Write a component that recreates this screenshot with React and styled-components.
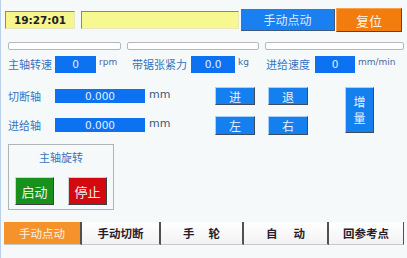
import styled, { createGlobalStyle } from "styled-components";

const GlobalStyle = createGlobalStyle`
  html, body {
    margin: 0;
    padding: 0;
    background: #ffffff;
  }
  body {
    font-family: "Noto Sans CJK SC", "DejaVu Sans", sans-serif;
  }
`;

const Screen = styled.div`
  width: 407px;
  height: 258px;
  background: #f5f9f9;
  border-left: 1px solid #b8d0e8;
  box-sizing: border-box;
  display: flex;
  flex-direction: column;
  overflow: hidden;
`;

const TopBar = styled.div`
  display: flex;
  align-items: center;
  padding: 8px 0 0 4px;
  height: 24px;
`;

const Clock = styled.div`
  width: 70px;
  height: 18px;
  box-sizing: border-box;
  background: #f6f68c;
  border: 1px solid;
  border-color: #8c8c64 #e6e6c0 #e6e6c0 #8c8c64;
  display: flex;
  align-items: center;
  justify-content: center;
  font-family: "DejaVu Sans", sans-serif;
  font-weight: bold;
  font-size: 10.5px;
  color: #202020;
`;

const Message = styled.div`
  width: 158px;
  height: 18px;
  margin-left: 6px;
  box-sizing: border-box;
  background: #f8f890;
  border: 1px solid;
  border-color: #8c8c64 #e6e6c0 #e6e6c0 #8c8c64;
`;

const ModeButton = styled.div`
  width: 94px;
  height: 22px;
  margin-left: 2px;
  box-sizing: border-box;
  background: #1a80f0;
  border-right: 1px solid #3a5a80;
  border-bottom: 1px solid #3a5a80;
  color: #dceaff;
  font-size: 12px;
  display: flex;
  align-items: center;
  justify-content: center;
`;

const ResetButton = styled.div`
  width: 66px;
  height: 24px;
  margin-left: 1px;
  box-sizing: border-box;
  background: #f27c0e;
  border: 1px solid;
  border-color: #f6a050 #604030 #604030 #f6a050;
  color: #fff4e0;
  font-size: 13px;
  display: flex;
  align-items: center;
  justify-content: center;
`;

const BarRow = styled.div`
  display: flex;
  margin: 10px 0 0 7px;
  gap: 6px;
`;

const Bar = styled.div`
  width: ${(p) => p.$w}px;
  height: 8px;
  box-sizing: border-box;
  background: #ffffff;
  border: 1px solid #b4b8bc;
  border-radius: 2px;
`;

const ParamRow = styled.div`
  display: flex;
  align-items: center;
  margin: 5px 0 0 7px;
  height: 18px;
`;

const Label = styled.span`
  font-size: 11px;
  color: #3674c4;
  white-space: nowrap;
  width: ${(p) => (p.$w ? `${p.$w}px` : "auto")};
`;

const Value = styled.div`
  width: ${(p) => p.$w}px;
  height: ${(p) => p.$h || 17}px;
  background: #0c72f2;
  color: #e6f0ff;
  font-family: "DejaVu Sans", sans-serif;
  font-size: 10.5px;
  display: flex;
  align-items: center;
  justify-content: center;
  flex-shrink: 0;
`;

const Unit = styled.span`
  font-family: "DejaVu Sans", sans-serif;
  font-size: 9px;
  color: #4a6a9a;
  margin: -4px 0 0 3px;
  width: ${(p) => (p.$w ? `${p.$w}px` : "auto")};
`;

const Middle = styled.div`
  display: flex;
  margin: 14px 0 0 7px;
`;

const AxisList = styled.div`
  width: 207px;
  display: flex;
  flex-direction: column;
  gap: 11px;
`;

const AxisRow = styled.div`
  display: flex;
  align-items: center;
  height: 18px;
`;

const AxisUnit = styled.span`
  font-family: "DejaVu Sans", sans-serif;
  font-size: 11px;
  color: #405878;
  margin: -3px 0 0 4px;
`;

const JogGrid = styled.div`
  display: grid;
  grid-template-columns: 40px 40px;
  grid-template-rows: 18px 19px;
  column-gap: 13px;
  row-gap: 11px;
`;

const BlueKey = styled.div`
  box-sizing: border-box;
  background: #1480f0;
  border: 1px solid;
  border-color: #a8d0f8 #3c4c60 #3c4c60 #a8d0f8;
  color: #e4efff;
  font-size: 12px;
  display: flex;
  align-items: center;
  justify-content: center;
`;

const IncrementKey = styled(BlueKey)`
  width: 29px;
  height: 46px;
  margin-left: 37px;
  flex-direction: column;
  line-height: 16px;
`;

const GroupBox = styled.div`
  width: 106px;
  height: 66px;
  margin: 9px 0 0 7px;
  box-sizing: border-box;
  border: 1px solid #b0b4b8;
  display: flex;
  flex-direction: column;
  align-items: center;
`;

const GroupTitle = styled.div`
  font-size: 11px;
  color: #3674c4;
  margin-top: 4px;
  height: 16px;
`;

const GroupButtons = styled.div`
  display: flex;
  gap: 14px;
  margin-top: 12px;
`;

const RunKey = styled.div`
  width: 39px;
  height: 28px;
  box-sizing: border-box;
  background: ${(p) => p.$bg};
  border: 1px solid;
  border-color: #c8d8c8 #404040 #404040 #c8d8c8;
  color: #f0f0f0;
  font-size: 13px;
  display: flex;
  align-items: center;
  justify-content: center;
`;

const TabBar = styled.div`
  display: flex;
  margin: 12px 0 0 3px;
  height: 23px;
`;

const Tab = styled.div`
  width: ${(p) => p.$w}px;
  box-sizing: border-box;
  background: ${(p) =>
    p.$active ? "#f6922c" : "linear-gradient(#ffffff, #f2f2f2)"};
  border-right: 2px solid #505050;
  border-bottom: 1px solid #c8c8c8;
  color: ${(p) => (p.$active ? "#fff2e0" : "#2a1e2e")};
  font-size: 11.5px;
  font-weight: ${(p) => (p.$active ? "normal" : "bold")};
  display: flex;
  align-items: center;
  justify-content: ${(p) => (p.$spread ? "space-between" : "center")};
  padding: ${(p) => (p.$spread ? "0 22px" : "0")};
  &:last-child {
    border-right: 1px solid #505050;
  }
`;

export default function App() {
  return (
    <>
      <GlobalStyle />
      <Screen>
        <TopBar>
          <Clock>19:27:01</Clock>
          <Message />
          <ModeButton>手动点动</ModeButton>
          <ResetButton>复位</ResetButton>
        </TopBar>

        <BarRow>
          <Bar $w={113} />
          <Bar $w={132} />
          <Bar $w={139} />
        </BarRow>

        <ParamRow>
          <Label $w={47}>主轴转速</Label>
          <Value $w={41}>0</Value>
          <Unit $w={33}>rpm</Unit>
          <Label $w={59}>带锯张紧力</Label>
          <Value $w={44}>0.0</Value>
          <Unit $w={28}>kg</Unit>
          <Label $w={49}>进给速度</Label>
          <Value $w={40}>0</Value>
          <Unit>mm/min</Unit>
        </ParamRow>

        <Middle>
          <AxisList>
            <AxisRow>
              <Label $w={47}>切断轴</Label>
              <Value $w={90} $h={14}>0.000</Value>
              <AxisUnit>mm</AxisUnit>
            </AxisRow>
            <AxisRow>
              <Label $w={47}>进给轴</Label>
              <Value $w={90} $h={14}>0.000</Value>
              <AxisUnit>mm</AxisUnit>
            </AxisRow>
          </AxisList>
          <JogGrid>
            <BlueKey>进</BlueKey>
            <BlueKey>退</BlueKey>
            <BlueKey>左</BlueKey>
            <BlueKey>右</BlueKey>
          </JogGrid>
          <IncrementKey>
            <span>增</span>
            <span>量</span>
          </IncrementKey>
        </Middle>

        <GroupBox>
          <GroupTitle>主轴旋转</GroupTitle>
          <GroupButtons>
            <RunKey $bg="#18901c">启动</RunKey>
            <RunKey $bg="#d20a10">停止</RunKey>
          </GroupButtons>
        </GroupBox>

        <TabBar>
          <Tab $w={78} $active>手动点动</Tab>
          <Tab $w={79}>手动切断</Tab>
          <Tab $w={83} $spread>
            <span>手</span>
            <span>轮</span>
          </Tab>
          <Tab $w={85} $spread>
            <span>自</span>
            <span>动</span>
          </Tab>
          <Tab $w={75}>回参考点</Tab>
        </TabBar>
      </Screen>
    </>
  );
}
